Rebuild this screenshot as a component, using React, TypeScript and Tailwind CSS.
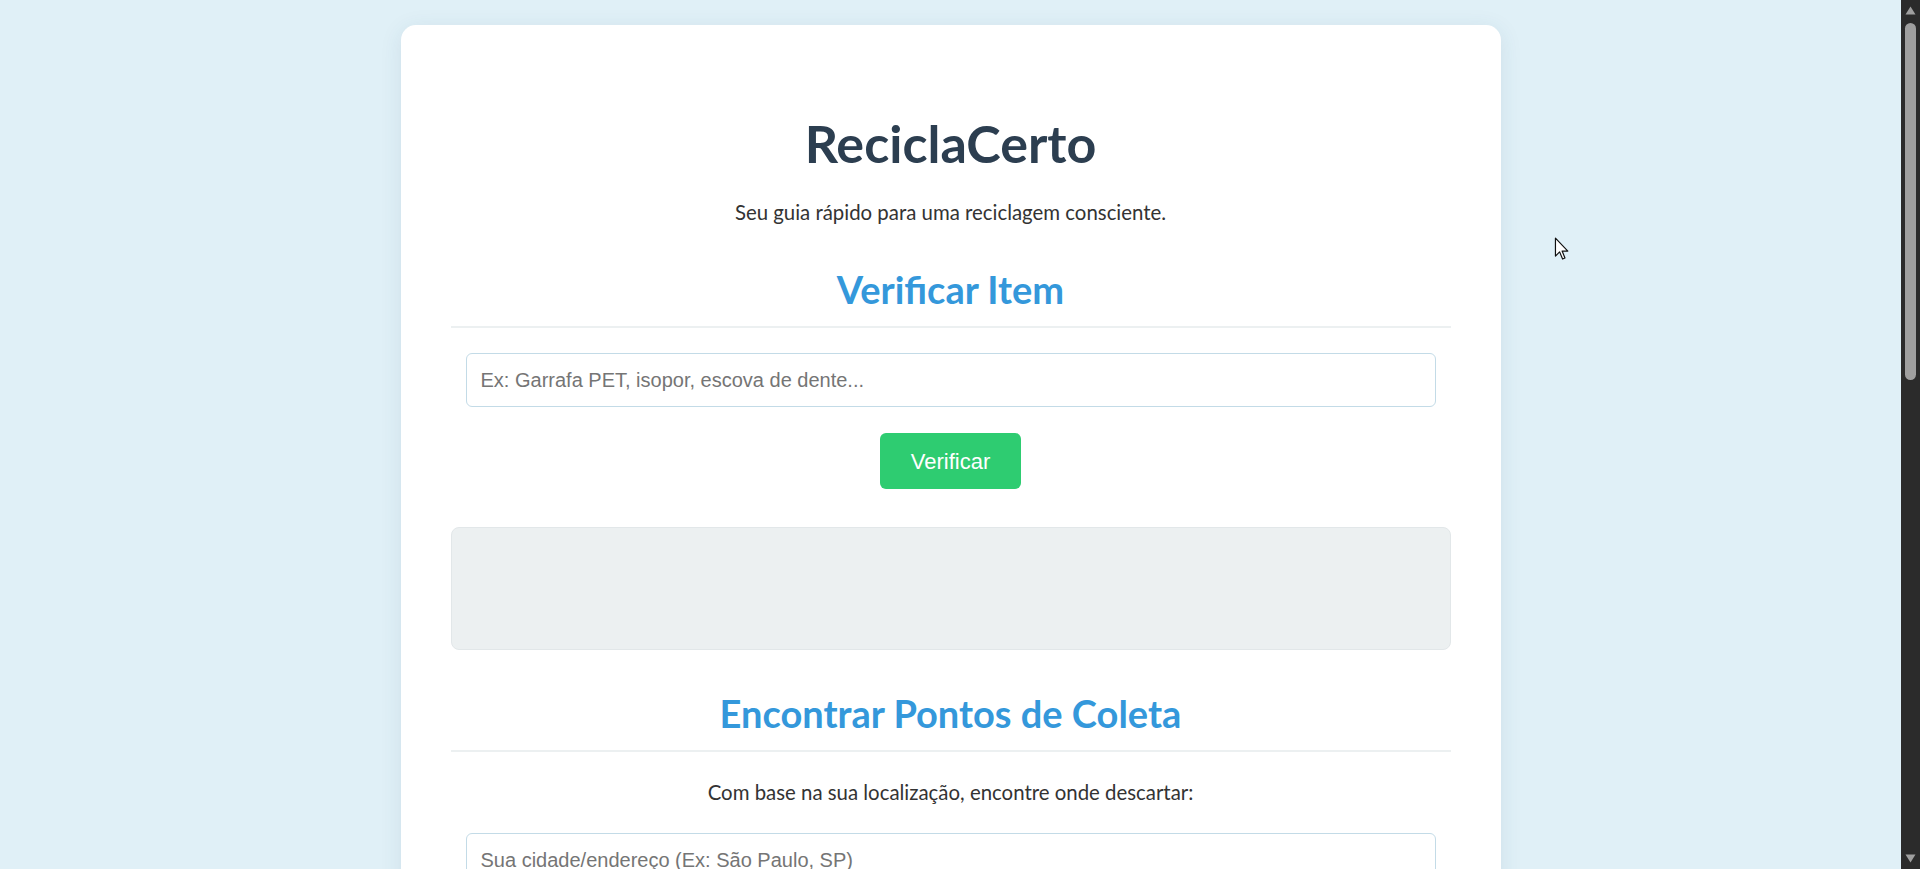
import React, { useState } from "react";

const sans = "font-['Lato','Noto_Sans',sans-serif]";
const arial = "font-['Liberation_Sans',Arial,sans-serif]";

function SectionTitle({ children }: { children: React.ReactNode }) {
    return (
        <h2 className="border-b-2 border-[#ecf0f1] pb-[14px] text-center text-[38px] font-bold leading-[46px] text-[#3498db]">
            {children}
        </h2>
    );
}

function FakeScrollbar() {
    return (
        <aside className="sticky top-0 flex h-screen w-[19px] shrink-0 flex-col items-center bg-[#2b2b2b]">
            <svg width="11" height="9" viewBox="0 0 11 9" className="mt-[6px]">
                <path d="M5.5 0.5 L10.5 8.5 L0.5 8.5 Z" fill="#9f9f9f" />
            </svg>
            <div className="mt-[8px] h-[357px] w-[11px] rounded-full bg-[#9f9f9f]" />
            <div className="flex-1" />
            <svg width="11" height="9" viewBox="0 0 11 9" className="mb-[6px]">
                <path d="M0.5 0.5 L10.5 0.5 L5.5 8.5 Z" fill="#9f9f9f" />
            </svg>
        </aside>
    );
}

export default function App() {
    const [item, setItem] = useState("");
    const [city, setCity] = useState("");

    return (
        <div className={`relative flex min-h-screen bg-[#e0f0f7] ${sans}`}>
            <main className="flex-1 pt-[25px] pb-10">
                <div className="mx-auto w-[1100px] rounded-[15px] bg-white px-[50px] pt-[88px] pb-[40px] shadow-[0_4px_22px_rgba(40,80,110,0.10)]">
                    {/* Header */}
                    <h1 className="text-center text-[52px] font-bold leading-[61px] text-[#2c3e50]">ReciclaCerto</h1>
                    <p className="mt-[26px] text-center text-[20.4px] leading-[24px] text-[#333]">
                        Seu guia rápido para uma reciclagem consciente.
                    </p>

                    {/* Verificar item */}
                    <section className="mt-[42px]">
                        <SectionTitle>Verificar Item</SectionTitle>
                        <input
                            type="text"
                            value={item}
                            onChange={(e) => setItem(e.target.value)}
                            placeholder="Ex: Garrafa PET, isopor, escova de dente..."
                            className={`mx-auto mt-[25px] block h-[54px] w-[970px] rounded-md border border-[#c3dbe7] bg-white px-[14px] text-[20px] text-[#333] outline-none placeholder:text-[#757575] ${arial}`}
                        />
                        <div className="mt-[26px] flex justify-center">
                            <button className={`h-[56px] w-[141px] rounded-md bg-[#2ecc71] text-[22px] text-white ${arial}`}>
                                Verificar
                            </button>
                        </div>
                        <div className="mt-[38px] h-[123px] rounded-lg border border-[#e2e7e9] bg-[#ecf0f1]" />
                    </section>

                    {/* Pontos de coleta */}
                    <section className="mt-[40px]">
                        <SectionTitle>Encontrar Pontos de Coleta</SectionTitle>
                        <p className="mt-[28px] text-center text-[20.4px] leading-[24px] text-[#333]">
                            Com base na sua localização, encontre onde descartar:
                        </p>
                        <input
                            type="text"
                            value={city}
                            onChange={(e) => setCity(e.target.value)}
                            placeholder="Sua cidade/endereço (Ex: São Paulo, SP)"
                            className={`mx-auto mt-[29px] block h-[54px] w-[970px] rounded-md border border-[#c3dbe7] bg-white px-[14px] text-[20px] text-[#333] outline-none placeholder:text-[#757575] ${arial}`}
                        />
                        <div className="mt-[26px] flex justify-center">
                            <button className={`h-[56px] rounded-md bg-[#2ecc71] px-[34px] text-[22px] text-white ${arial}`}>
                                Buscar
                            </button>
                        </div>
                    </section>
                </div>
            </main>

            <FakeScrollbar />

            {/* mouse pointer */}
            <svg width="16" height="25" viewBox="0 0 13 21" className="pointer-events-none absolute left-[1554px] top-[237px]">
                <path d="M1 1 L1 16 L4.5 12.5 L7 18.5 L9 17.6 L6.6 11.8 L11.4 11.8 Z" fill="#fff" stroke="#111" strokeWidth="1" strokeLinejoin="round" />
            </svg>
        </div>
    );
}
